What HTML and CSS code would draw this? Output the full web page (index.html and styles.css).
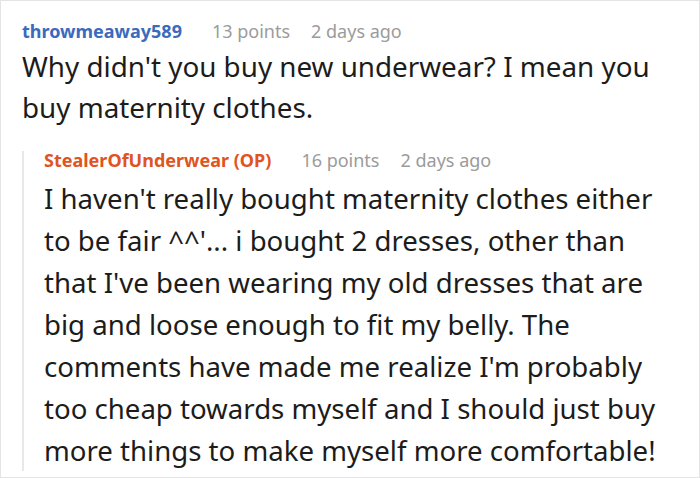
FILE: index.html
```html
<!DOCTYPE html>
<html>
<head>
<meta charset="utf-8">
<link rel="stylesheet" href="styles.css">
</head>
<body>
<div class="thread">
  <div class="comment">
    <div class="meta">
      <span class="author">throwmeaway589</span>
      <span class="points">13 points</span>
      <span class="time">2 days ago</span>
    </div>
    <p class="body">Why didn't you buy new underwear? I mean you buy maternity clothes.</p>
    <div class="reply">
      <div class="meta">
        <span class="author op">StealerOfUnderwear (OP)</span>
        <span class="points">16 points</span>
        <span class="time">2 days ago</span>
      </div>
      <p class="body">I haven't really bought maternity clothes either to be fair ^^'... i bought 2 dresses, other than that I've been wearing my old dresses that are big and loose enough to fit my belly. The comments have made me realize I'm probably too cheap towards myself and I should just buy more things to make myself more comfortable!</p>
    </div>
  </div>
</div>
</body>
</html>
```
FILE: styles.css
```css
html, body {
  margin: 0;
  padding: 0;
  background: #ffffff;
}
body {
  font-family: "Noto Sans", "Open Sans", sans-serif;
  color: #1c1c1c;
}
.thread {
  width: 700px;
  height: 478px;
  box-sizing: border-box;
  border: 1px solid #e4e4e4;
  padding: 17px 20px 0 21px;
  overflow: hidden;
}
.meta {
  display: flex;
  align-items: baseline;
  font-size: 18px;
  line-height: 26px;
  color: #9b9b9b;
}
.author {
  font-weight: 700;
  color: #3a6bbd;
  margin-right: 30px;
}
.author.op {
  color: #e0541f;
}
.points {
  margin-right: 21px;
}
.body {
  margin: 2px 0 0;
  font-size: 27.8px;
  line-height: 41px;
}
.reply {
  margin-top: 23px;
  border-left: 2px solid #e8e8e8;
  padding-left: 20px;
}
.reply .meta {
  line-height: 18px;
}
.reply .body {
  margin-top: 8px;
  margin-bottom: -10px;
  font-size: 27.6px;
  line-height: 42px;
}
```
